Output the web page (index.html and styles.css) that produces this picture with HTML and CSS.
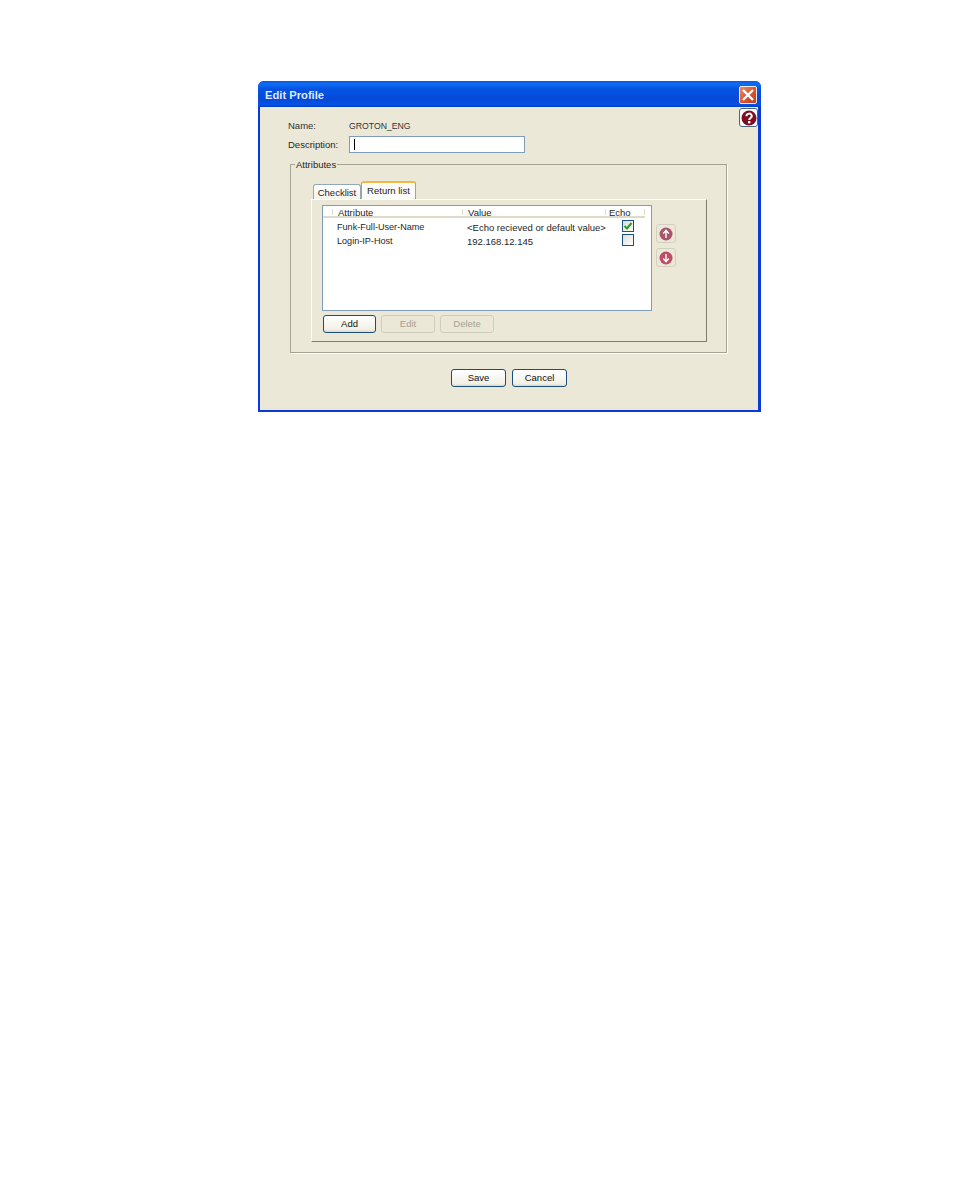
FILE: index.html
```html
<!DOCTYPE html>
<html lang="en">
<head>
<meta charset="utf-8">
<title>Edit Profile</title>
<link rel="stylesheet" href="styles.css">
</head>
<body>
<div class="window">
  <div class="titlebar">
    <span class="title">Edit Profile</span>
    <span class="close"><svg width="14" height="14" viewBox="0 0 14 14"><path d="M2 2L12 12M12 2L2 12" stroke="#fff" stroke-width="2.4" fill="none"/></svg></span>
  </div>
  <div class="body">
    <div class="help-row">
      <span class="help"><svg width="16" height="16" viewBox="0 0 16 16"><circle cx="8" cy="8" r="7.5" fill="#7d0f22"/><path d="M5.4 6.2C5.4 2.8 10.8 2.8 10.8 6C10.8 8 8.2 8 8.2 10" stroke="#fff" stroke-width="2" fill="none"/><rect x="7" y="11" width="2.4" height="2.4" fill="#fff"/></svg></span>
    </div>
    <div class="name-row"><span class="label">Name:</span><span class="name-value">GROTON_ENG</span></div>
    <div class="desc-row"><span class="label">Description:</span><div class="input"><span class="caret"></span></div></div>
    <div class="fieldset">
      <span class="legend">Attributes</span>
      <div class="tabs">
        <span class="tab">Checklist</span>
        <span class="tab tab-active">Return list</span>
      </div>
      <div class="panel">
        <div class="panel-main">
          <div class="table">
            <div class="thead">
              <span class="th th-mark"></span>
              <span class="th th-attr">Attribute</span>
              <span class="th th-val">Value</span>
              <span class="th th-echo">Echo</span>
            </div>
            <div class="row">
              <span class="c-attr">Funk-Full-User-Name</span>
              <span class="c-val">&lt;Echo recieved or default value&gt;</span>
              <span class="check"><svg width="10" height="10" viewBox="0 0 10 10"><path d="M1.5 5L4 7.5L8.5 2" stroke="#21a121" stroke-width="2" fill="none"/></svg></span>
            </div>
            <div class="row">
              <span class="c-attr">Login-IP-Host</span>
              <span class="c-val">192.168.12.145</span>
              <span class="check"></span>
            </div>
          </div>
          <div class="table-actions">
            <span class="btn">Add</span>
            <span class="btn btn-off">Edit</span>
            <span class="btn btn-off">Delete</span>
          </div>
        </div>
        <div class="movers">
          <span class="mover"><svg width="14" height="14" viewBox="0 0 14 14"><circle cx="7" cy="7" r="6.5" fill="#a8566b"/><path d="M7 11V4M4.2 6.4L7 3.4L9.8 6.4" stroke="#fff" stroke-width="1.4" fill="none"/></svg></span>
          <span class="mover"><svg width="14" height="14" viewBox="0 0 14 14"><circle cx="7" cy="7" r="6.5" fill="#bd4d66"/><path d="M7 3V10M4.2 7.6L7 10.6L9.8 7.6" stroke="#fff" stroke-width="1.4" fill="none"/></svg></span>
        </div>
      </div>
    </div>
    <div class="footer">
      <span class="btn btn-wide">Save</span>
      <span class="btn btn-wide">Cancel</span>
    </div>
  </div>
</div>
</body>
</html>
```
FILE: styles.css
```css
html, body { margin: 0; padding: 0; background: #fff; }
body {
  height: 1184px;
  padding: 81px 0 0 258px;
  box-sizing: border-box;
  font-family: "Liberation Sans", Arial, sans-serif;
  font-size: 9.5px;
  color: #262626;
}
.window {
  width: 503px;
  height: 331px;
  box-sizing: border-box;
  display: flex;
  flex-direction: column;
  border-radius: 6px 6px 0 0;
  overflow: hidden;
  background: #0a3ad8;
}
.titlebar {
  height: 26px;
  flex: none;
  display: flex;
  align-items: center;
  justify-content: space-between;
  padding: 2px 4px 0 7px;
  box-sizing: border-box;
  background: linear-gradient(#0a5ae6 0%, #0f6ef2 12%, #0553e2 30%, #0449da 70%, #0552e4 90%, #0340c4 100%);
}
.title { color: #dfe9fb; font-size: 11.2px; font-weight: bold; }
.close {
  width: 18px; height: 18px;
  display: flex; align-items: center; justify-content: center;
  box-sizing: border-box;
  border: 1px solid #f2e8e0;
  border-radius: 2px;
  background: linear-gradient(135deg, #e98a68, #d2512e 60%, #c04022);
}
.body {
  flex: 1;
  margin: 0 3px 2px 2px;
  background: #ebe8d8;
  display: flex;
  flex-direction: column;
  padding: 0 0 0 28px;
  min-height: 0;
}
.help-row { height: 0; display: flex; justify-content: flex-end; position: relative; }
.help {
  width: 19px; height: 19px;
  margin-top: 1px;
  box-sizing: border-box;
  display: flex; align-items: center; justify-content: center;
  background: #fff;
  border: 1px solid #47677f;
  border-radius: 3px;
}
.name-row { display: flex; height: 12px; margin: 13px 0 0 0; line-height: 12px; color: #333; }
.name-value { font-size: 8.7px; }
.label { width: 61px; flex: none; }
.desc-row { display: flex; align-items: center; height: 17px; margin-top: 4px; }
.input {
  width: 176px; height: 17px;
  box-sizing: border-box;
  background: #fff;
  border: 1px solid #7f9db9;
  padding: 2px 4px;
}
.caret { display: block; width: 1px; height: 11px; background: #000; }
.fieldset {
  position: relative;
  width: 437px;
  height: 189px;
  box-sizing: border-box;
  margin: 11px 0 0 2px;
  border: 1px solid #a5a396;
  box-shadow: 1px 1px 0 #fff;
  padding: 16px 0 0 20px;
}
.legend {
  position: absolute;
  left: 4px; top: -6px;
  padding: 0 1px;
  background: #ebe8d8;
  line-height: 11px;
}
.tabs { display: flex; align-items: flex-end; height: 18px; padding-left: 2px; }
.tab {
  width: 48px; height: 15px;
  box-sizing: border-box;
  border: 1px solid #91a7b4;
  border-bottom: 0;
  border-radius: 3px 3px 0 0;
  background: linear-gradient(#fff, #f4f3ec);
  text-align: center;
  line-height: 16px;
}
.tab-active {
  width: 55px; height: 18px;
  border-top: 2px solid #f2b744;
  background: #fbfbf8;
  line-height: 15px;
}
.panel {
  width: 396px;
  height: 143px;
  box-sizing: border-box;
  display: flex;
  border: 1px solid #fff;
  border-right: 1px solid #7f7d70;
  border-bottom: 1px solid #7f7d70;
  padding: 5px 0 0 10px;
}
.panel-main { width: 330px; flex: none; }
.table {
  width: 330px; height: 106px;
  box-sizing: border-box;
  background: #fff;
  border: 1px solid #7f9db9;
}
.thead {
  display: flex;
  height: 10px;
  border-bottom: 2px solid #dedbca;
  margin: 0 6px 2px 0;
}
.th {
  height: 6px;
  margin-top: 3px;
  line-height: 8px;
  white-space: nowrap;
  box-sizing: border-box;
  border-right: 1px solid #dedbca;
  padding-left: 5px;
}
.th-mark { width: 10px; padding: 0; }
.th-attr { width: 130px; }
.th-val { width: 143px; }
.th-echo { width: 39px; padding-left: 3px; }
.row { display: flex; align-items: center; height: 14px; }
.c-attr { width: 130px; padding-left: 14px; flex: none; font-size: 9.1px; }
.c-val { width: 155px; flex: none; white-space: nowrap; }
.check {
  width: 12px; height: 12px;
  margin-top: -2px;
  box-sizing: border-box;
  border: 1px solid #1c5180;
  background: linear-gradient(135deg, #dcdcd6, #fff);
  display: flex; align-items: center; justify-content: center;
}
.table-actions { display: flex; gap: 5px; margin: 4px 0 0 1px; }
.btn {
  width: 53px; height: 18px;
  box-sizing: border-box;
  border: 1px solid #1b4e7c;
  border-radius: 3px;
  background: linear-gradient(#fff, #f2f0e6 85%, #dcd8c8);
  text-align: center;
  line-height: 16px;
  color: #111;
}
.btn-off { width: 54px; border-color: #cfccbc; background: #ebe8d8; color: #a3a192; }
.movers { display: flex; flex-direction: column; gap: 5px; margin: 19px 0 0 4px; }
.mover {
  width: 20px; height: 19px;
  box-sizing: border-box;
  border: 1px solid #d4d0bf;
  border-radius: 3px;
  display: flex; align-items: center; justify-content: center;
}
.footer { display: flex; gap: 6px; margin: 16px 0 0 163px; }
.btn-wide { width: 55px; }
```
